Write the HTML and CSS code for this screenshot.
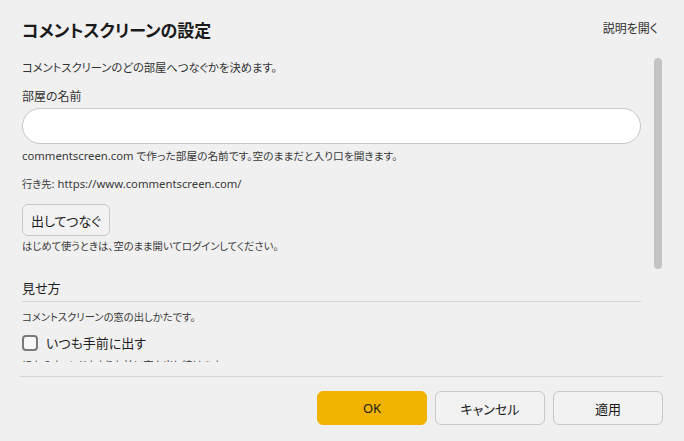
FILE: index.html
```html
<!DOCTYPE html>
<html lang="ja">
<head>
<meta charset="utf-8">
<title>コメントスクリーンの設定</title>
<link rel="stylesheet" href="styles.css">
</head>
<body>
<div class="dialog">
  <header class="header">
    <h1 class="title">コメントスクリーンの設定</h1>
    <a class="help" href="#">説明を開く</a>
  </header>
  <div class="main">
    <div class="content">
      <p class="lead">コメントスクリーンのどの部屋へつなぐかを決めます。</p>
      <label class="label" for="room">部屋の名前</label>
      <input class="input" id="room" type="text">
      <p class="hint hint-1"><span class="en">commentscreen.com</span> で作った部屋の名前です。空のままだと入り口を開きます。</p>
      <p class="hint hint-2">行き先<span class="en">: https://www.commentscreen.com/</span></p>
      <button class="btn btn-connect" type="button">出してつなぐ</button>
      <p class="hint hint-3">はじめて使うときは、空のまま開いてログインしてください。</p>
      <h2 class="section">見せ方</h2>
      <p class="hint hint-4">コメントスクリーンの窓の出しかたです。</p>
      <label class="check"><span class="box"></span><span>いつも手前に出す</span></label>
      <p class="hint hint-5">ほかのウィンドウよりも前に窓を出し続けます。</p>
    </div>
    <div class="scrollbar"><div class="thumb"></div></div>
  </div>
  <footer class="footer">
    <button class="btn btn-primary" type="button">OK</button>
    <button class="btn btn-footer" type="button">キャンセル</button>
    <button class="btn btn-footer" type="button">適用</button>
  </footer>
</div>
</body>
</html>
```
FILE: styles.css
```css
* { box-sizing: border-box; }
html, body {
  margin: 0;
  padding: 0;
  background: #f0f0f0;
}
body {
  font-family: "Noto Sans", "Noto Sans CJK JP", sans-serif;
  font-feature-settings: "palt";
  color: #1f1f1f;
  width: 684px;
  height: 441px;
  overflow: hidden;
}
.dialog {
  display: flex;
  flex-direction: column;
  height: 441px;
}
.header {
  height: 58px;
  flex-shrink: 0;
  padding: 19px 26px 0 22px;
  display: flex;
  justify-content: space-between;
  align-items: flex-start;
}
.title {
  margin: 0;
  font-size: 17px;
  line-height: 24px;
  font-weight: 700;
  color: #1a1a1a;
}
.help {
  font-size: 12px;
  line-height: 20px;
  color: #333;
  text-decoration: none;
}
.main {
  height: 304px;
  flex-shrink: 0;
  display: flex;
  overflow: hidden;
  padding-left: 22px;
}
.content {
  width: 619px;
  display: flex;
  flex-direction: column;
  align-items: flex-start;
}
.content > * { flex-shrink: 0; }
.lead {
  margin: 0;
  font-size: 11.3px;
  line-height: 20px;
  color: #333;
}
.label {
  margin-top: 10px;
  font-size: 12px;
  line-height: 18px;
  color: #333;
}
.input {
  margin-top: 2px;
  width: 619px;
  height: 36px;
  border: 1px solid #c6c6c6;
  border-radius: 18px;
  background: #fff;
  outline: none;
  padding: 0 16px;
  font: inherit;
}
.hint {
  margin: 0;
  font-size: 10.3px;
  line-height: 18px;
  color: #3a3a3a;
}
.en { font-size: 11.3px; }
.hint-1 { margin-top: 3px; font-size: 10.7px; }
.hint-2 { margin-top: 10px; }
.hint-3 { margin-top: 1px; }
.hint-4 { margin-top: 6px; }
.hint-5 { margin-top: 3px; }
.btn {
  font-family: inherit;
  font-feature-settings: "palt";
  border: 1px solid #c9c9c9;
  border-radius: 6px;
  background: #f2f2f2;
  color: #1a1a1a;
  cursor: pointer;
}
.btn-connect {
  margin-top: 11px;
  width: 88px;
  height: 32px;
  font-size: 13px;
  padding: 0;
}
.section {
  margin: 24px 0 0;
  align-self: stretch;
  font-size: 13px;
  line-height: 18px;
  font-weight: 400;
  color: #1f1f1f;
  padding-bottom: 4px;
  border-bottom: 1px solid #d4d4d4;
}
.check {
  margin-top: 7px;
  display: flex;
  align-items: center;
  gap: 8px;
  font-size: 13px;
  line-height: 20px;
  color: #1f1f1f;
}
.box {
  width: 16px;
  height: 16px;
  border: 2px solid #7a7a7a;
  border-radius: 4px;
  background: #f8f8f8;
}
.scrollbar {
  margin-left: 13px;
  width: 8px;
  flex-shrink: 0;
}
.thumb {
  width: 8px;
  height: 211px;
  border-radius: 4px;
  background: #c4c4c4;
}
.footer {
  margin: 14px 21px 0 20px;
  border-top: 1px solid #d6d6d6;
  padding-top: 14px;
  display: flex;
  justify-content: flex-end;
  gap: 8px;
}
.btn-footer, .btn-primary {
  width: 110px;
  height: 34px;
  font-size: 13px;
  padding: 0;
}
.btn-primary {
  background: #f0b400;
  border-color: #f0b400;
  color: #1a1a1a;
}
```
